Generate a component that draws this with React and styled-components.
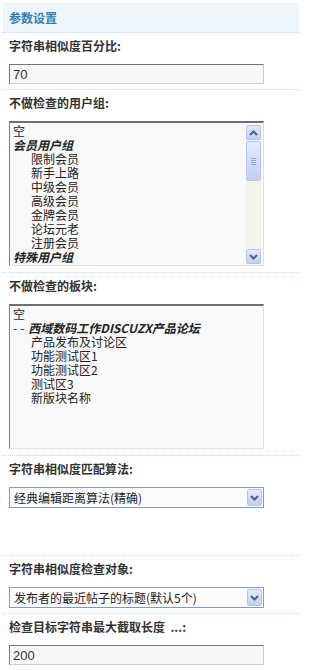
import React from "react";
import styled, { createGlobalStyle } from "styled-components";

const Global = createGlobalStyle`
  html, body { margin: 0; padding: 0; background: #fff; }
  body {
    font-family: "Noto Sans CJK SC", "Liberation Sans", sans-serif;
    font-size: 12px;
    color: #333;
  }
`;

const Page = styled.div`
  padding: 3px 0 0 3px;
  width: 296px;
`;

const Header = styled.div`
  height: 29px;
  display: flex;
  align-items: center;
  padding-left: 6px;
  background: #eef5fb;
  border-bottom: 1px dotted #c3d7e8;
  color: #2a7fb5;
  font-weight: bold;
  font-size: 12px;
`;

const Section = styled.div`
  padding: 0 0 ${(p) => p.$pb ?? 5}px 6px;
  border-bottom: ${(p) => (p.$last ? "none" : "1px dotted #c3d7e8")};
`;

const Label = styled.div`
  padding-top: 6px;
  line-height: 14px;
  height: 14px;
  margin-bottom: 11px;
  font-weight: bold;
  color: #333;
  font-size: 12px;
  white-space: pre;
`;

const TextInput = styled.input`
  display: block;
  box-sizing: border-box;
  width: 255px;
  height: 20px;
  margin: 0;
  padding: 0 3px;
  border: 1px solid;
  border-color: #777 #ccc #ccc #777;
  background: #f7f7f7;
  color: #333;
  font-family: "Liberation Sans", "DejaVu Sans", sans-serif;
  font-size: 13px;
  outline: none;
`;

const ListBox = styled.div`
  box-sizing: border-box;
  width: 255px;
  height: 145px;
  display: flex;
  border-style: solid;
  border-width: 2px 1px 1px 1px;
  border-color: #6e6e6e #dedede #dedede #808080;
  background: #f9f9f9;
`;

const Items = styled.div`
  flex: 1;
  overflow: hidden;
  padding-top: 1px;
`;

const Item = styled.div`
  height: 14px;
  line-height: 14px;
  padding-left: ${(p) => (p.$indent ? 21 : 3)}px;
  color: #222;
  font-size: 12px;
  white-space: nowrap;
  font-weight: ${(p) => (p.$group ? "bold" : "normal")};
  font-style: ${(p) => (p.$group ? "italic" : "normal")};
`;

const Dash = styled.span`
  font-weight: normal;
  font-style: normal;
  letter-spacing: 3px;
  margin-right: 1px;
`;

const ScrollBar = styled.div`
  width: 15px;
  margin: 2px 2px 1px 0;
  display: flex;
  flex-direction: column;
  background: #f4f3ee;
`;

const ScrollBtn = styled.div`
  box-sizing: border-box;
  height: 15px;
  border: 1px solid #b3c5ee;
  border-radius: 2px;
  background: linear-gradient(to bottom, #e3ebfc, #bfd0f6);
  display: flex;
  align-items: center;
  justify-content: center;
`;

const Thumb = styled(ScrollBtn)`
  height: 40px;
  margin-top: 1px;
  flex-direction: column;
  gap: 1px;
`;

const Grip = styled.span`
  display: block;
  width: 5px;
  height: 1px;
  background: #8ca4d8;
`;

const Track = styled.div`
  flex: 1;
`;

const SelectBox = styled.div`
  box-sizing: border-box;
  width: 255px;
  height: 21px;
  display: flex;
  align-items: center;
  border: 1px solid #7f9db9;
  background: #fcfcfc;
`;

const SelectText = styled.div`
  flex: 1;
  padding-left: 4px;
  color: #222;
  font-size: 12px;
  white-space: nowrap;
`;

const SelectArrow = styled(ScrollBtn)`
  width: 15px;
  height: 17px;
  margin-right: 1px;
`;

const Chevron = ({ up }) => (
  <svg width="9" height="6" viewBox="0 0 9 6">
    <path
      d={up ? "M1 5 L4.5 1.5 L8 5" : "M1 1 L4.5 4.5 L8 1"}
      fill="none"
      stroke="#4d6185"
      strokeWidth="2"
    />
  </svg>
);

const groups = [
  { t: "空" },
  { t: "会员用户组", g: true },
  { t: "限制会员", i: true },
  { t: "新手上路", i: true },
  { t: "中级会员", i: true },
  { t: "高级会员", i: true },
  { t: "金牌会员", i: true },
  { t: "论坛元老", i: true },
  { t: "注册会员", i: true },
  { t: "特殊用户组", g: true },
];

const forums = [
  "产品发布及讨论区",
  "功能测试区1",
  "功能测试区2",
  "测试区3",
  "新版块名称",
];

export default function App() {
  return (
    <>
      <Global />
      <Page>
        <Header>参数设置</Header>

        <Section>
          <Label>字符串相似度百分比:</Label>
          <TextInput defaultValue="70" />
        </Section>

        <Section $pb={6}>
          <Label>不做检查的用户组:</Label>
          <ListBox>
            <Items>
              {groups.map((g) => (
                <Item key={g.t} $group={g.g} $indent={g.i}>
                  {g.t}
                </Item>
              ))}
            </Items>
            <ScrollBar>
              <ScrollBtn>
                <Chevron up />
              </ScrollBtn>
              <Thumb>
                <Grip />
                <Grip />
                <Grip />
                <Grip />
              </Thumb>
              <Track />
              <ScrollBtn>
                <Chevron />
              </ScrollBtn>
            </ScrollBar>
          </ListBox>
        </Section>

        <Section $pb={6}>
          <Label>不做检查的板块:</Label>
          <ListBox>
            <Items>
              <Item>空</Item>
              <Item $group>
                <Dash>--</Dash>西域数码工作DISCUZX产品论坛
              </Item>
              {forums.map((f) => (
                <Item key={f} $indent>
                  {f}
                </Item>
              ))}
            </Items>
          </ListBox>
        </Section>

        <Section $pb={47}>
          <Label>字符串相似度匹配算法:</Label>
          <SelectBox>
            <SelectText>经典编辑距离算法(精确)</SelectText>
            <SelectArrow>
              <Chevron />
            </SelectArrow>
          </SelectBox>
        </Section>

        <Section>
          <Label>字符串相似度检查对象:</Label>
          <SelectBox>
            <SelectText>发布者的最近帖子的标题(默认5个)</SelectText>
            <SelectArrow>
              <Chevron />
            </SelectArrow>
          </SelectBox>
        </Section>

        <Section $last>
          <Label>{"检查目标字符串最大截取长度  ...:"}</Label>
          <TextInput defaultValue="200" />
        </Section>
      </Page>
    </>
  );
}
